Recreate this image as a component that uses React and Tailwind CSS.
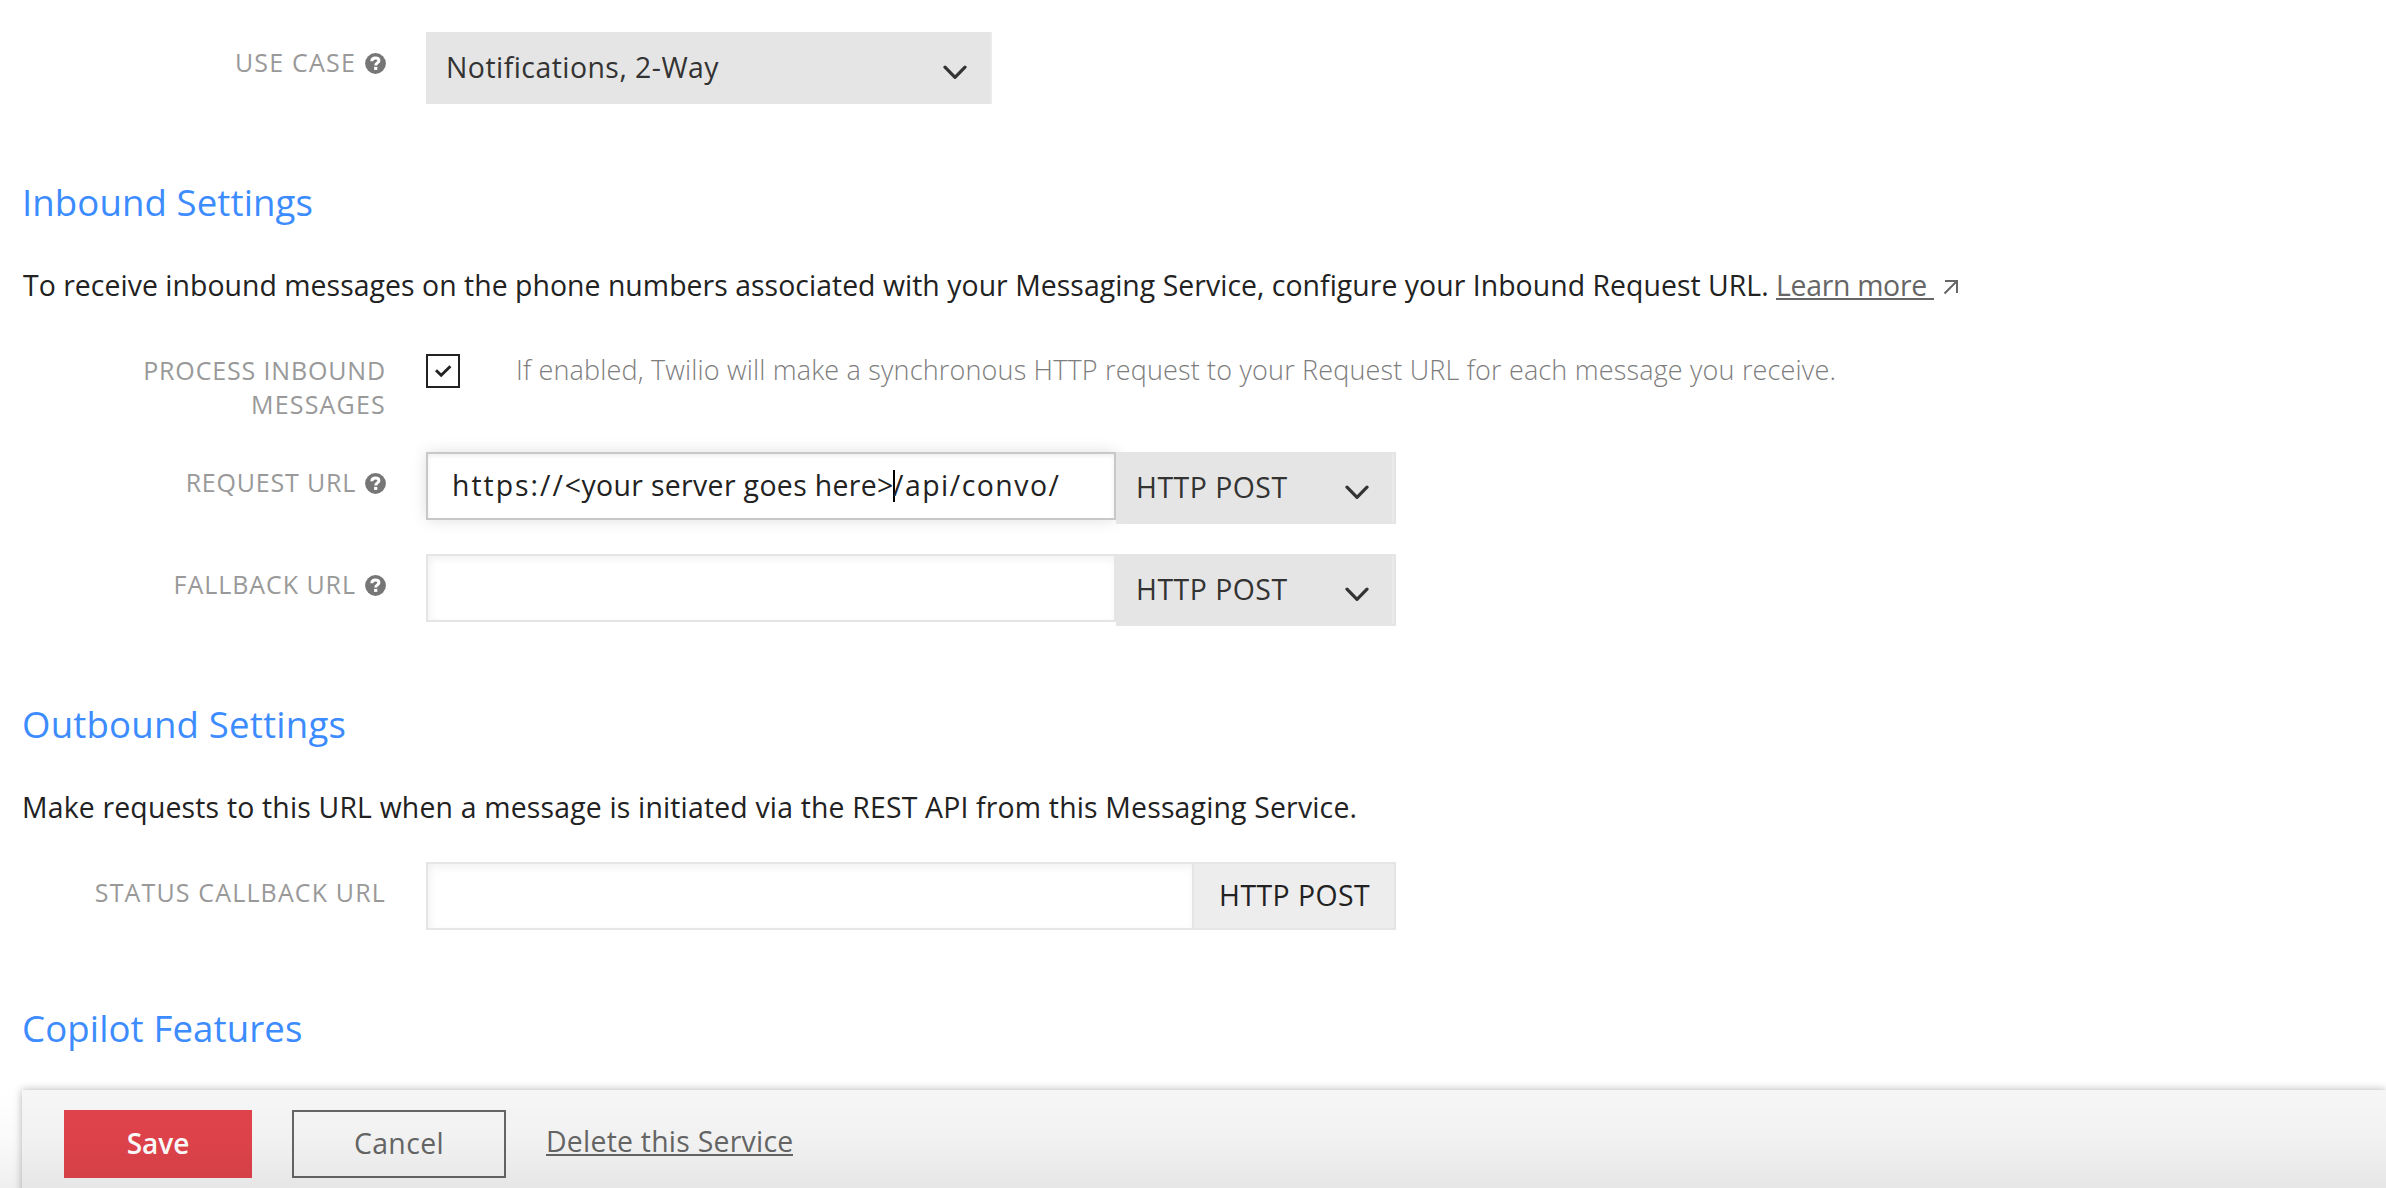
function HelpIcon() {
  return (
    <svg viewBox="0 0 21 21" className="mt-[8px] ml-[9px] h-[21px] w-[21px] shrink-0">
      <circle cx="10.5" cy="10.5" r="10.4" fill="#767676" />
      <path d="M6.8 8.3C6.9 6.2 8.3 5.1 10.4 5.1c2.1 0 3.5 1 3.5 2.7 0 2.1-3.2 2.1-3.2 4.6" fill="none" stroke="#fff" strokeWidth="3" />
      <rect x="9.1" y="13.9" width="3.2" height="3" fill="#fff" />
    </svg>
  );
}

function Chevron() {
  return (
    <svg viewBox="0 0 24 15" className="h-[15px] w-[24px] shrink-0" fill="none" stroke="#333" strokeWidth="3.2" strokeLinecap="round" strokeLinejoin="round">
      <path d="M2 2.2 12 12.4 22 2.2" />
    </svg>
  );
}

function Label({ children, help, className = "" }) {
  return (
    <div className="flex w-[386px] shrink-0 justify-end pt-[13px] text-[25px] leading-[34px] whitespace-nowrap text-[#999]">
      <span className={className}>{children}</span>
      {help && <HelpIcon />}
    </div>
  );
}

function Heading({ children, className = "" }) {
  return <h2 className={`mt-[74px] ml-[22px] text-[36.6px] leading-[48px] text-[#3c8cff] ${className}`}>{children}</h2>;
}

function MethodSelect() {
  return (
    <div className="flex h-[72px] w-[280px] border-2 border-[#e5e5e5] bg-[#e5e5e5] pt-[13px] pr-[25px] pl-[18px] text-[#333] shadow-[inset_-2px_0_0_#ebebeb]">
      <span className="grow text-[28.4px] leading-[40px] tracking-[0.5px]">HTTP POST</span>
      <span className="mt-[18px]"><Chevron /></span>
    </div>
  );
}

export default function App() {
  return (
    <div className="relative flex h-[1188px] flex-col overflow-hidden bg-white pt-8 font-['Open_Sans',sans-serif] text-[28.4px] text-[#222]">
      <div className="flex gap-10">
        <Label help className="tracking-[1.2px]">USE CASE</Label>
        <div className="flex h-[72px] w-[566px] bg-[#e5e5e5] pt-[15px] pr-[25px] pl-[20px] text-[#333] shadow-[inset_-2px_0_0_#ebebeb]">
          <span className="grow leading-[40px] tracking-[0.48px]">Notifications, 2-Way</span>
          <span className="mt-[18px]"><Chevron /></span>
        </div>
      </div>

      <Heading className="tracking-[0.1px]">Inbound Settings</Heading>
      <p className="mt-[39px] ml-[23px] flex leading-[40px] whitespace-nowrap">
        <span className="w-[1753px] tracking-[0.045px]">
          To receive inbound messages on the phone numbers associated with your Messaging Service, configure your Inbound Request URL.
        </span>
        <a className="h-[35px] w-[158px] border-b-2 border-[#666] tracking-[-0.3px] text-[#666]">Learn more</a>
        <svg viewBox="0 0 16 16" className="mt-[14px] ml-[9px] h-[16px] w-[16px]" fill="none" stroke="#666" strokeWidth="2">
          <path d="M2 2H14V14M14 2 1.5 14.5" />
        </svg>
      </p>

      <div className="mt-[48px] flex gap-10">
        <div className="w-[386px] text-right text-[25px] leading-[34px] text-[#999]">
          <div className="tracking-[0.85px]">PROCESS INBOUND</div>
          <div className="tracking-[1.2px]">MESSAGES</div>
        </div>
        <div className="flex">
          <div className="mt-px flex h-[34px] w-[34px] items-center justify-center border-2 border-[#222]">
            <svg viewBox="0 0 18 14" className="h-[14px] w-[18px]" fill="none" stroke="#222" strokeWidth="2.8" strokeLinecap="butt">
              <path d="M2 6.2 7.2 11.3 16.4 2.2" />
            </svg>
          </div>
          <p className="ml-[56px] text-[27px] leading-[33px] font-light tracking-[0.17px] whitespace-nowrap text-[#7d7d7d]">
            If enabled, Twilio will make a synchronous HTTP request to your Request URL for each message you receive.
          </p>
        </div>
      </div>

      <div className="mt-[31px] flex gap-10">
        <Label help className="tracking-[0.8px]">REQUEST URL</Label>
        <div className="flex">
          <div className="flex h-[68px] w-[690px] border-2 border-[#c8c8c8] bg-white pt-[11px] pl-[24px] leading-[40px] whitespace-nowrap shadow-[0_0_14px_rgba(0,0,0,0.13),inset_0_2px_4px_rgba(0,0,0,0.07)]">
            <span className="w-[441px] tracking-[0.36px]">
              <span className="tracking-[2px]">https://</span>&lt;your server goes here&gt;
            </span>
            <span className="mt-[5px] h-[32px] w-[2px] bg-black" />
            <span className="-ml-[2px] tracking-[1.5px]">/api/convo/</span>
          </div>
          <div className="relative"><MethodSelect /></div>
        </div>
      </div>

      <div className="mt-[30px] flex gap-10">
        <Label help className="tracking-[0.95px]">FALLBACK URL</Label>
        <div className="flex">
          <div className="h-[68px] w-[690px] border-2 border-[#e5e5e5] bg-white shadow-[inset_2px_3px_8px_rgba(0,0,0,0.06)]" />
          <MethodSelect />
        </div>
      </div>

      <Heading className="tracking-[0.2px]">Outbound Settings</Heading>
      <p className="mt-[39px] ml-[22px] leading-[40px] tracking-[0.18px]">
        Make requests to this URL when a message is initiated via the REST API from this Messaging Service.
      </p>

      <div className="mt-[35px] flex gap-10">
        <Label className="tracking-[1.15px]">STATUS CALLBACK URL</Label>
        <div className="flex h-[68px] w-[970px] border-2 border-[#e5e5e5]">
          <div className="w-[764px] shadow-[inset_2px_3px_8px_rgba(0,0,0,0.06)]" />
          <div className="grow border-l-2 border-[#e5e5e5] bg-[#ededed] pt-[11px] pl-[25px] leading-[40px] tracking-[0.45px]">HTTP POST</div>
        </div>
      </div>

      <Heading className="tracking-[0.12px]">Copilot Features</Heading>

      <div className="mt-[38px] ml-[22px] flex h-[120px] shrink-0 bg-[#f6f6f6] pt-5 pl-[42px] shadow-[0_0_8px_rgba(0,0,0,0.3)]">
        <button className="h-[68px] w-[188px] bg-[#e1434b] pb-[2px] text-[28px] leading-[64px] font-semibold text-white">Save</button>
        <button className="ml-10 h-[68px] w-[214px] border-2 border-[#666] pb-[2px] leading-[60px] tracking-[0.4px] text-[#666]">Cancel</button>
        <a className="mt-[11px] ml-10 h-[35px] border-b-2 border-[#666] leading-[40px] tracking-[0.25px] text-[#666]">Delete this Service</a>
      </div>

      <div className="pointer-events-none absolute inset-x-0 bottom-0 h-[96px] bg-linear-to-b from-transparent via-black/[0.02] to-black/[0.065]" />
    </div>
  );
}
